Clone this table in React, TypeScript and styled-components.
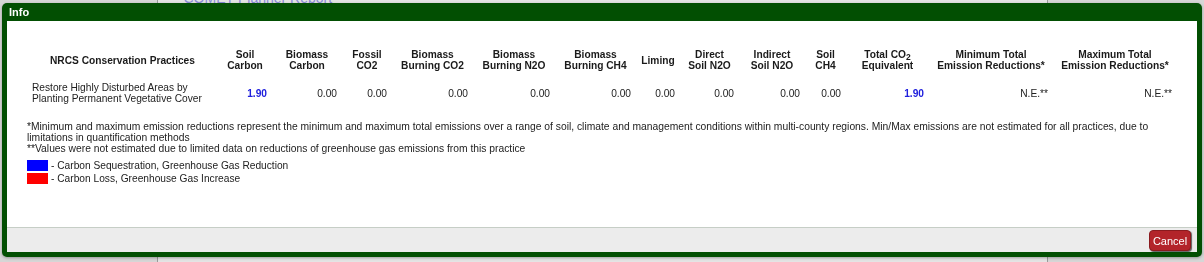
import React from "react";
import styled, {createGlobalStyle} from "styled-components";

interface Column {
  label: React.ReactNode;
  width: number;
  value: string;
  highlight?: boolean;
}

const columns: Column[] = [
  {label: <>Soil<br />Carbon</>, width: 54, value: "1.90", highlight: true},
  {label: <>Biomass<br />Carbon</>, width: 70, value: "0.00"},
  {label: <>Fossil<br />CO2</>, width: 50, value: "0.00"},
  {label: <>Biomass<br />Burning CO2</>, width: 81, value: "0.00"},
  {label: <>Biomass<br />Burning N2O</>, width: 82, value: "0.00"},
  {label: <>Biomass<br />Burning CH4</>, width: 81, value: "0.00"},
  {label: "Liming", width: 44, value: "0.00"},
  {label: <>Direct<br />Soil N2O</>, width: 59, value: "0.00"},
  {label: <>Indirect<br />Soil N2O</>, width: 66, value: "0.00"},
  {label: <>Soil<br />CH4</>, width: 41, value: "0.00"},
  {label: <>Total CO<sub>2</sub><br />Equivalent</>, width: 83, value: "1.90", highlight: true},
  {label: <>Minimum Total<br />Emission Reductions*</>, width: 124, value: "N.E.**"},
  {label: <>Maximum Total<br />Emission Reductions*</>, width: 124, value: "N.E.**"},
];

const GlobalStyle = createGlobalStyle`
  html, body {
    margin: 0;
    padding: 0;
    background: #d8d8d8;
    font-family: "Liberation Sans", Arial, sans-serif;
  }
`;

export default function App() {
  return (
    <>
      <GlobalStyle />
      <BackgroundPage>
        <PageColumn>
          <ReportLink>COMET-Planner Report</ReportLink>
        </PageColumn>
      </BackgroundPage>
      <Dialog>
        <TitleBar>Info</TitleBar>
        <Body>
          <ResultTable>
            <thead>
              <tr>
                <HeadCell $width={191}>NRCS Conservation Practices</HeadCell>
                {columns.map((c, i) => (
                  <HeadCell key={i} $width={c.width}>
                    {c.label}
                  </HeadCell>
                ))}
              </tr>
            </thead>
            <tbody>
              <tr>
                <PracticeCell>
                  Restore Highly Disturbed Areas by
                  <br />
                  Planting Permanent Vegetative Cover
                </PracticeCell>
                {columns.map((c, i) => (
                  <ValueCell key={i} $highlight={c.highlight}>
                    {c.value}
                  </ValueCell>
                ))}
              </tr>
            </tbody>
          </ResultTable>
          <Notes>
            <p>
              *Minimum and maximum emission reductions represent the minimum and maximum total
              emissions over a range of soil, climate and management conditions within multi-county
              regions. Min/Max emissions are not estimated for all practices, due to limitations in
              quantification methods
            </p>
            <p>**Values were not estimated due to limited data on reductions of greenhouse gas emissions from this practice</p>
          </Notes>
          <Legend>
            <LegendRow>
              <Swatch $color="#0000ff" />- Carbon Sequestration, Greenhouse Gas Reduction
            </LegendRow>
            <LegendRow>
              <Swatch $color="#ff0000" />- Carbon Loss, Greenhouse Gas Increase
            </LegendRow>
          </Legend>
        </Body>
        <Footer>
          <CancelButton>Cancel</CancelButton>
        </Footer>
      </Dialog>
    </>
  );
}

const BackgroundPage = styled.div`
  display: flex;
  justify-content: center;
  height: 262px;
  overflow: hidden;
  background: #d6d6d6;
`;

const PageColumn = styled.div`
  width: 889px;
  border-left: 1px solid #9a9a9a;
  border-right: 1px solid #9a9a9a;
  background: #e4e4e4;
`;

const ReportLink = styled.div`
  margin: -9px 0 0 26px;
  font-size: 14px;
  line-height: 14px;
  color: #8a8ad8;
`;

const Dialog = styled.div`
  position: fixed;
  left: 2px;
  top: 3px;
  width: 1200px;
  height: 254px;
  box-sizing: border-box;
  display: flex;
  flex-direction: column;
  padding: 0 5px 5px;
  background: #024f02;
  border-radius: 5px;
  box-shadow: 0 1px 3px rgba(0, 0, 0, 0.3);
`;

const TitleBar = styled.div`
  height: 18px;
  line-height: 18px;
  padding-left: 2px;
  color: #ffffff;
  font-size: 11px;
  font-weight: bold;
`;

const Body = styled.div`
  flex: 1;
  background: #ffffff;
  padding: 23px 20px 0;
  color: #222;
`;

const ResultTable = styled.table`
  width: 1150px;
  table-layout: fixed;
  border-collapse: collapse;
`;

const HeadCell = styled.th<{$width: number}>`
  width: ${(p) => p.$width}px;
  box-sizing: border-box;
  padding: 5px 5px 6px;
  font-size: 10.2px;
  line-height: 11px;
  font-weight: bold;
  text-align: center;
  vertical-align: middle;
  color: #1a1a1a;

  sub {
    font-size: 8.5px;
    line-height: 0;
    vertical-align: -2px;
  }
`;

const PracticeCell = styled.td`
  padding: 5px;
  font-size: 10.2px;
  line-height: 11px;
  text-align: left;
`;

const ValueCell = styled.td<{$highlight?: boolean}>`
  padding: 5px;
  font-size: 10.2px;
  line-height: 11px;
  text-align: right;
  color: ${(p) => (p.$highlight ? "#2020dd" : "#222")};
  font-weight: ${(p) => (p.$highlight ? "bold" : "normal")};
`;

const Notes = styled.div`
  margin-top: 12px;
  font-size: 10.3px;
  line-height: 11px;

  p {
    margin: 0;
  }
`;

const Legend = styled.div`
  margin-top: 6px;
  display: flex;
  flex-direction: column;
  gap: 2px;
  font-size: 10.2px;
`;

const LegendRow = styled.div`
  display: flex;
  align-items: center;
  height: 11px;
  gap: 3px;
`;

const Swatch = styled.span<{$color: string}>`
  width: 21px;
  height: 11px;
  background: ${(p) => p.$color};
`;

const Footer = styled.div`
  display: flex;
  justify-content: flex-end;
  align-items: flex-start;
  height: 22px;
  box-sizing: content-box;
  padding: 2px 6px 0;
  background: #ececec;
  border-top: 1px solid #c6cec6;
`;

const CancelButton = styled.button`
  width: 42px;
  height: 21px;
  padding: 0;
  font-family: "Liberation Sans", Arial, sans-serif;
  font-size: 11px;
  color: #ffffff;
  background: #b3242a;
  border: 1px solid #8a1a1e;
  border-radius: 4px;
  box-shadow: 1px 1px 1px rgba(0, 0, 0, 0.6);
`;
